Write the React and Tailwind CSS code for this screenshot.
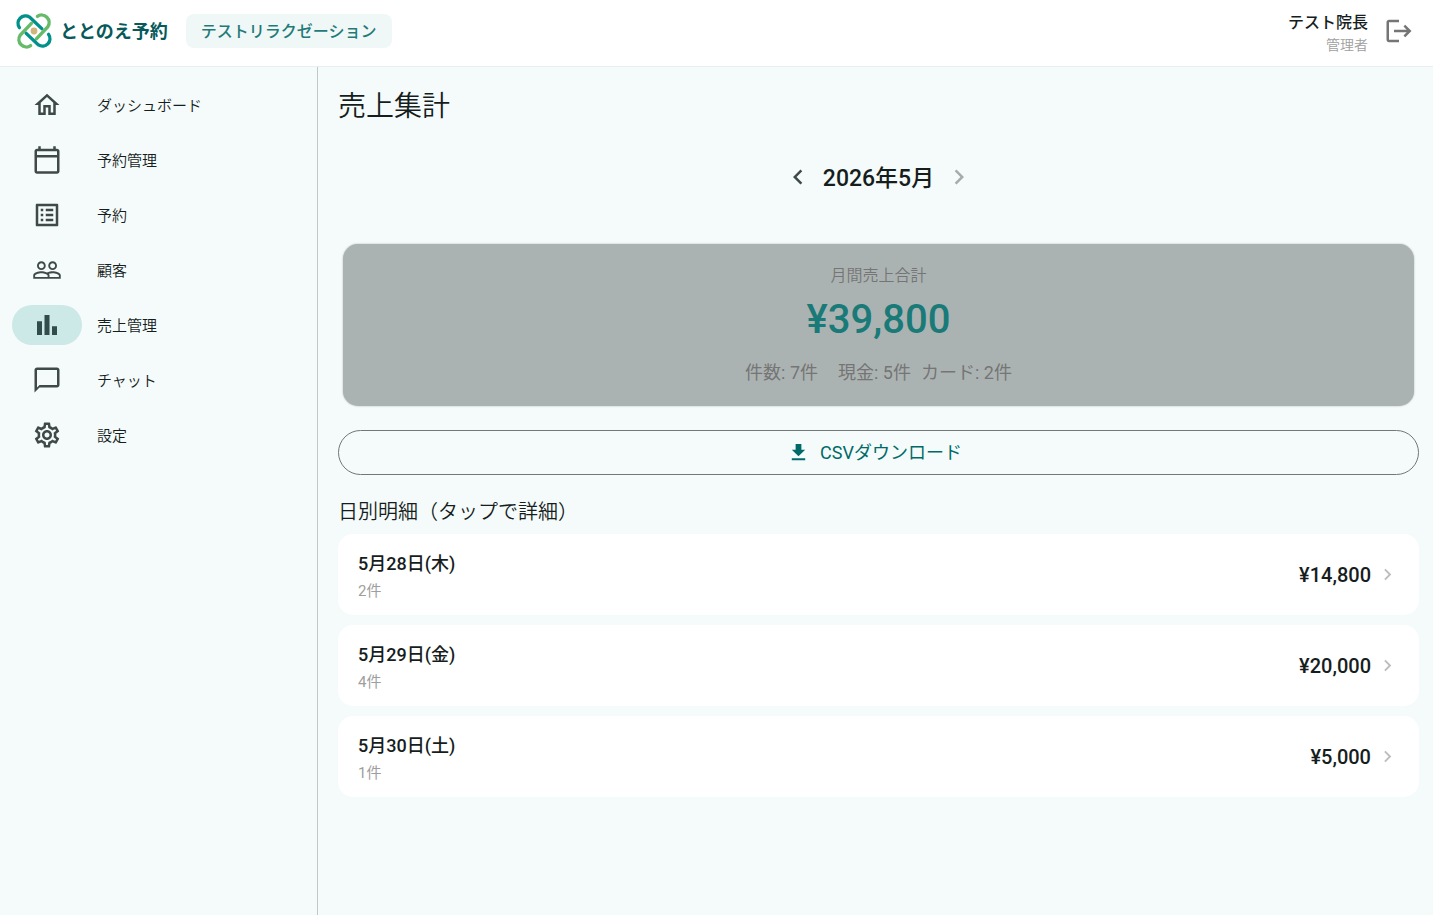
import {
    MdBarChart,
    MdChevronLeft,
    MdChevronRight,
    MdDownload,
    MdLogout,
    MdOutlineCalendarToday,
    MdOutlineChatBubbleOutline,
    MdOutlineHome,
    MdOutlineListAlt,
    MdOutlineSettings,
    MdPeopleOutline,
} from 'react-icons/md'

const menu = [
    { label: 'ダッシュボード', Icon: MdOutlineHome },
    { label: '予約管理', Icon: MdOutlineCalendarToday },
    { label: '予約', Icon: MdOutlineListAlt },
    { label: '顧客', Icon: MdPeopleOutline },
    { label: '売上管理', Icon: MdBarChart, active: true },
    { label: 'チャット', Icon: MdOutlineChatBubbleOutline },
    { label: '設定', Icon: MdOutlineSettings },
]

const days = [
    { date: '5月28日(木)', count: '2件', amount: '¥14,800' },
    { date: '5月29日(金)', count: '4件', amount: '¥20,000' },
    { date: '5月30日(土)', count: '1件', amount: '¥5,000' },
]

function LogoMark() {
    const loop = 'M61 83A22 22 0 0 1 91 52L127 86'
    return (
        <svg viewBox="51 40 106 106" className="size-9" fill="none" strokeWidth="10" strokeLinecap="round" aria-hidden="true">
            <path d={loop} stroke="#00918a" />
            <path d={loop} stroke="#66bb6a" transform="rotate(90 104 93)" />
            <path d={loop} stroke="#00918a" transform="rotate(180 104 93)" />
            <path d={loop} stroke="#66bb6a" transform="rotate(270 104 93)" />
            <circle cx="104" cy="93" r="10" fill="#d1b67c" />
        </svg>
    )
}

function Header() {
    return (
        <header className="flex h-[67px] items-center justify-between border-b border-[#e9eeee] bg-white pr-[19px] pb-1 pl-4">
            <div className="flex items-center gap-[18px]">
                <a href="#" className="flex items-center gap-2 text-[18px] font-bold text-[#07595a]">
                    <LogoMark />
                    ととのえ予約
                </a>
                <span className="rounded-lg bg-[#f0f7f7] px-[15px] pt-[2px] text-[16px] leading-8 font-medium text-[#1f7a78]">
                    テストリラクゼーション
                </span>
            </div>
            <div className="flex items-center gap-4">
                <div className="pt-1 text-right">
                    <p className="text-[16px] leading-6 font-medium text-[#161d1d]">テスト院長</p>
                    <p className="text-[14px] leading-5 font-[350] text-[#9e9e9e]">管理者</p>
                </div>
                <button type="button" aria-label="ログアウト" className="text-[#757575]">
                    <MdLogout className="size-[30px]" />
                </button>
            </div>
        </header>
    )
}

function Sidebar() {
    return (
        <nav className="flex w-[318px] shrink-0 flex-col border-r border-[#bec9c8] px-3 pt-[10px]">
            {menu.map(({ label, Icon, active }) => (
                <a key={label} href="#" className="flex h-[55px] items-center gap-[15px] text-[15px] font-[350] text-[#161d1d]">
                    <span className={`flex h-10 w-[70px] items-center justify-center rounded-full ${active ? 'bg-[#cce8e7] text-[#324b4b]' : 'text-[#3f4948]'}`}>
                        <Icon className="size-[30px]" />
                    </span>
                    <span className="pt-[3px]">{label}</span>
                </a>
            ))}
        </nav>
    )
}

function MonthPicker() {
    return (
        <div className="mt-[31px] flex items-center justify-center gap-[10px]">
            <button type="button" aria-label="前の月" className="text-[#3f4948]">
                <MdChevronLeft className="size-[30px]" />
            </button>
            <span className="pt-1 text-[23px] leading-[34px] font-medium text-[#161d1d]">2026年5月</span>
            <button type="button" aria-label="次の月" className="text-[#a5acab]" disabled>
                <MdChevronRight className="size-[30px]" />
            </button>
        </div>
    )
}

function Summary() {
    return (
        <section className="mx-[5px] mt-12 flex flex-col items-center rounded-[15px] bg-[#abb3b2] pt-5 pb-5 text-[#757575] shadow-[0_0_2px_rgba(0,0,0,0.3)]">
            <p className="text-[16px] leading-6 font-[350]">月間売上合計</p>
            <p className="text-[40px] leading-[64px] font-medium text-[#197a78]">¥39,800</p>
            <div className="mt-2 flex text-[18px] leading-[26px]">
                <span className="mr-5">件数: 7件</span>
                <span className="mr-[10px]">現金: 5件</span>
                <span>カード: 2件</span>
            </div>
        </section>
    )
}

function DayRow({ date, count, amount }) {
    return (
        <li>
            <button type="button" className="flex h-[81px] w-full items-center rounded-[15px] bg-white px-5 text-left">
                <span className="flex flex-1 flex-col pt-[2px]">
                    <span className="text-[18px] leading-[30px] font-medium text-[#161d1d]">{date}</span>
                    <span className="text-[15px] leading-6 text-[#9e9e9e]">{count}</span>
                </span>
                <span className="text-[20px] font-medium text-[#161d1d]">{amount}</span>
                <MdChevronRight className="ml-[5px] size-[23px] text-[#bdbdbd]" />
            </button>
        </li>
    )
}

export default function App() {
    return (
        <div className="flex min-h-screen flex-col bg-[#f4fbfa] font-[Roboto,'Noto_Sans_CJK_JP',sans-serif]">
            <Header />
            <div className="flex flex-1">
                <Sidebar />
                <main className="flex-1 pt-5 pr-[14px] pl-5">
                    <h1 className="text-[28px] leading-10 font-[350] text-[#161d1d]">売上集計</h1>
                    <MonthPicker />
                    <Summary />
                    <button type="button" className="mt-6 flex h-[45px] w-full items-center justify-center gap-[10px] rounded-full border border-[#6f7978] pr-2 text-[18px] text-[#006a68]">
                        <MdDownload className="size-[23px]" />
                        CSVダウンロード
                    </button>
                    <h2 className="mt-[22px] text-[20px] leading-[30px] font-[350] text-[#161d1d]">日別明細（タップで詳細）</h2>
                    <ul className="mt-[7px] flex flex-col gap-[10px]">
                        {days.map((day) => (
                            <DayRow key={day.date} {...day} />
                        ))}
                    </ul>
                </main>
            </div>
        </div>
    )
}
